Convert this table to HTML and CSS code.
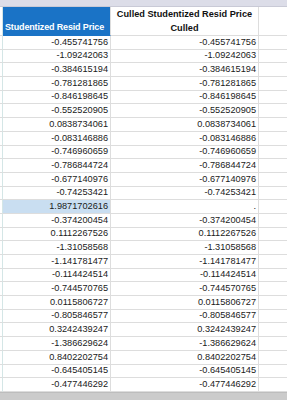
FILE: index.html
```html
<!DOCTYPE html>
<html>
<head>
<meta charset="utf-8">
<link rel="stylesheet" href="styles.css">
</head>
<body>
<div class="sheet">
  <div class="topbar"></div>
  <div class="row head">
    <div class="c0"></div>
    <div class="c1 hblue">Studentized Resid Price</div>
    <div class="c2 hwhite">Culled Studentized Resid Price Culled</div>
    <div class="c3"></div>
  </div>
  <div class="row"><div class="c0"></div><div class="c1">-0.455741756</div><div class="c2">-0.455741756</div><div class="c3"></div></div>
  <div class="row"><div class="c0"></div><div class="c1">-1.09242063</div><div class="c2">-1.09242063</div><div class="c3"></div></div>
  <div class="row"><div class="c0"></div><div class="c1">-0.384615194</div><div class="c2">-0.384615194</div><div class="c3"></div></div>
  <div class="row"><div class="c0"></div><div class="c1">-0.781281865</div><div class="c2">-0.781281865</div><div class="c3"></div></div>
  <div class="row"><div class="c0"></div><div class="c1">-0.846198645</div><div class="c2">-0.846198645</div><div class="c3"></div></div>
  <div class="row"><div class="c0"></div><div class="c1">-0.552520905</div><div class="c2">-0.552520905</div><div class="c3"></div></div>
  <div class="row"><div class="c0"></div><div class="c1">0.0838734061</div><div class="c2">0.0838734061</div><div class="c3"></div></div>
  <div class="row"><div class="c0"></div><div class="c1">-0.083146886</div><div class="c2">-0.083146886</div><div class="c3"></div></div>
  <div class="row"><div class="c0"></div><div class="c1">-0.746960659</div><div class="c2">-0.746960659</div><div class="c3"></div></div>
  <div class="row"><div class="c0"></div><div class="c1">-0.786844724</div><div class="c2">-0.786844724</div><div class="c3"></div></div>
  <div class="row"><div class="c0"></div><div class="c1">-0.677140976</div><div class="c2">-0.677140976</div><div class="c3"></div></div>
  <div class="row"><div class="c0"></div><div class="c1">-0.74253421</div><div class="c2">-0.74253421</div><div class="c3"></div></div>
  <div class="row"><div class="c0"></div><div class="c1 sel">1.9871702616</div><div class="c2">.</div><div class="c3"></div></div>
  <div class="row"><div class="c0"></div><div class="c1">-0.374200454</div><div class="c2">-0.374200454</div><div class="c3"></div></div>
  <div class="row"><div class="c0"></div><div class="c1">0.1112267526</div><div class="c2">0.1112267526</div><div class="c3"></div></div>
  <div class="row"><div class="c0"></div><div class="c1">-1.31058568</div><div class="c2">-1.31058568</div><div class="c3"></div></div>
  <div class="row"><div class="c0"></div><div class="c1">-1.141781477</div><div class="c2">-1.141781477</div><div class="c3"></div></div>
  <div class="row"><div class="c0"></div><div class="c1">-0.114424514</div><div class="c2">-0.114424514</div><div class="c3"></div></div>
  <div class="row"><div class="c0"></div><div class="c1">-0.744570765</div><div class="c2">-0.744570765</div><div class="c3"></div></div>
  <div class="row"><div class="c0"></div><div class="c1">0.0115806727</div><div class="c2">0.0115806727</div><div class="c3"></div></div>
  <div class="row"><div class="c0"></div><div class="c1">-0.805846577</div><div class="c2">-0.805846577</div><div class="c3"></div></div>
  <div class="row"><div class="c0"></div><div class="c1">0.3242439247</div><div class="c2">0.3242439247</div><div class="c3"></div></div>
  <div class="row"><div class="c0"></div><div class="c1">-1.386629624</div><div class="c2">-1.386629624</div><div class="c3"></div></div>
  <div class="row"><div class="c0"></div><div class="c1">0.8402202754</div><div class="c2">0.8402202754</div><div class="c3"></div></div>
  <div class="row"><div class="c0"></div><div class="c1">-0.645405145</div><div class="c2">-0.645405145</div><div class="c3"></div></div>
  <div class="row"><div class="c0"></div><div class="c1">-0.477446292</div><div class="c2">-0.477446292</div><div class="c3"></div></div>
  <div class="bottombar"></div>
</div>
</body>
</html>
```
FILE: styles.css
```css
* { box-sizing: border-box; }
html, body { margin: 0; padding: 0; background: #ffffff; }
body { width: 287px; height: 400px; overflow: hidden; }
.sheet {
  display: flex;
  flex-direction: column;
  width: 287px;
  height: 400px;
  font-family: "Liberation Sans", Arial, sans-serif;
  font-size: 9.2px;
  color: #1a1a1a;
}
.topbar {
  height: 7px;
  flex: none;
  background: #dcdde8;
  border-bottom: 1px solid #c9cad6;
}
.row {
  display: flex;
  height: 13.7px;
  flex: none;
}
.row.head { height: 29px; }
.row > div {
  border-right: 1px solid #dddddd;
  border-bottom: 1px solid #dddddd;
  display: flex;
  align-items: center;
  justify-content: flex-end;
  padding-right: 2px;
  white-space: nowrap;
  overflow: hidden;
  line-height: 1;
}
.c0 { width: 3px; flex: none; padding: 0 !important; border-right-color: #d4e6e6 !important; }
.c1 { width: 108px; flex: none; }
.c2 { width: 148px; flex: none; }
.c3 { flex: 1; border-right: none !important; }
.hblue {
  background: #1a73c6;
  color: #ffffff;
  font-weight: bold;
  font-size: 9px;
  letter-spacing: -0.15px;
  align-items: flex-end !important;
  justify-content: flex-start !important;
  padding: 0 0 3px 2px !important;
  border-bottom-color: #1a73c6 !important;
}
.hwhite {
  font-weight: bold;
  font-size: 9.2px;
  color: #111111;
  white-space: normal !important;
  text-align: center;
  justify-content: center !important;
  line-height: 14px !important;
  padding: 0 4px !important;
}
.sel { background: #c9def1; }
.bottombar {
  flex: 1;
  background: #cbcbcb;
  border-top: 1px solid #bdbdbd;
}
```
